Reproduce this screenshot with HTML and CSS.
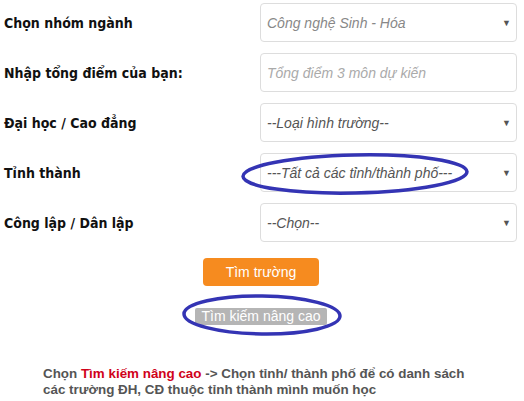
FILE: index.html
```html
<!DOCTYPE html>
<html lang="vi">
<head>
<meta charset="utf-8">
<link rel="stylesheet" href="styles.css">
</head>
<body>
<div class="page">
  <form class="form">
    <div class="row">
      <label class="label">Chọn nhóm ngành</label>
      <div class="field select"><span class="val muted">Công nghệ Sinh - Hóa</span><span class="arrow">▼</span></div>
    </div>
    <div class="row">
      <label class="label">Nhập tổng điểm của bạn:</label>
      <div class="field"><span class="val placeholder">Tổng điểm 3 môn dự kiến</span></div>
    </div>
    <div class="row">
      <label class="label">Đại học / Cao đẳng</label>
      <div class="field select"><span class="val">--Loại hình trường--</span><span class="arrow">▼</span></div>
    </div>
    <div class="row">
      <label class="label">Tỉnh thành</label>
      <div class="field select"><span class="val">---Tất cả các tỉnh/thành phố---</span><span class="arrow">▼</span></div>
    </div>
    <div class="row">
      <label class="label">Công lập / Dân lập</label>
      <div class="field select"><span class="val">--Chọn--</span><span class="arrow">▼</span></div>
    </div>
    <div class="actions">
      <button type="button" class="btn btn-primary">Tìm trường</button>
      <button type="button" class="btn btn-adv">Tìm kiếm nâng cao</button>
    </div>
  </form>
  <p class="note">Chọn <span class="hl">Tìm kiếm nâng cao</span> -&gt; Chọn tỉnh/ thành phố để có danh sách<br>các trường ĐH, CĐ thuộc tỉnh thành mình muốn học</p>

  <svg class="mark mark-select" width="232" height="46" viewBox="0 0 232 46">
    <ellipse cx="116" cy="23" rx="112" ry="19" transform="rotate(-1.2 116 23)" fill="none" stroke="#3434b4" stroke-width="3.5"/>
  </svg>
  <svg class="mark mark-adv" width="164" height="48" viewBox="0 0 164 48">
    <ellipse cx="82" cy="24" rx="78" ry="19" transform="rotate(0.8 82 24)" fill="none" stroke="#3434b4" stroke-width="3.5"/>
  </svg>
</div>
</body>
</html>
```

FILE: styles.css
```css
html, body {
  margin: 0;
  padding: 0;
  background: #fff;
}
.page {
  position: relative;
  width: 524px;
  height: 401px;
  overflow: hidden;
}
.form {
  padding: 3px 7px 0 4px;
  display: flex;
  flex-direction: column;
  gap: 11px;
}
.row {
  display: flex;
  align-items: center;
  height: 39px;
}
.label {
  width: 256px;
  font-family: "DejaVu Sans Condensed", "DejaVu Sans", Verdana, sans-serif;
  font-stretch: condensed;
  font-weight: bold;
  font-size: 14px;
  color: #111;
}
.field {
  flex: 1;
  height: 39px;
  box-sizing: border-box;
  border: 1px solid #ddd;
  border-radius: 4px;
  display: flex;
  align-items: center;
  padding: 0 5px 0 6px;
  font-family: "Liberation Sans", Arial, sans-serif;
  font-style: italic;
  font-size: 14px;
  color: #555;
}
.val { flex: 1; }
.muted { color: #888; }
.placeholder { color: #aaa; }
.arrow {
  font-style: normal;
  font-size: 9px;
  color: #555;
}
.actions {
  display: flex;
  flex-direction: column;
  align-items: center;
  gap: 22px;
  margin-top: 5px;
  padding-left: 1px;
}
.btn {
  border: none;
  font-family: "Liberation Sans", Arial, sans-serif;
  font-size: 14px;
  color: #fff;
  padding: 0;
}
.btn-primary {
  width: 116px;
  height: 28px;
  background: #f68b1f;
  border-radius: 4px;
}
.btn-adv {
  width: 132px;
  height: 17px;
  background: #b5b5b5;
  border-radius: 2px;
  font-size: 14px;
  line-height: 17px;
}
.note {
  margin: 41px 0 0 43px;
  font-family: "Liberation Sans", Arial, sans-serif;
  font-weight: bold;
  font-size: 13.4px;
  line-height: 16px;
  color: #555;
}
.hl { color: #d0021b; }
.mark {
  position: absolute;
  pointer-events: none;
}
.mark-select { left: 239px; top: 151px; }
.mark-adv { left: 180px; top: 291px; }
```
